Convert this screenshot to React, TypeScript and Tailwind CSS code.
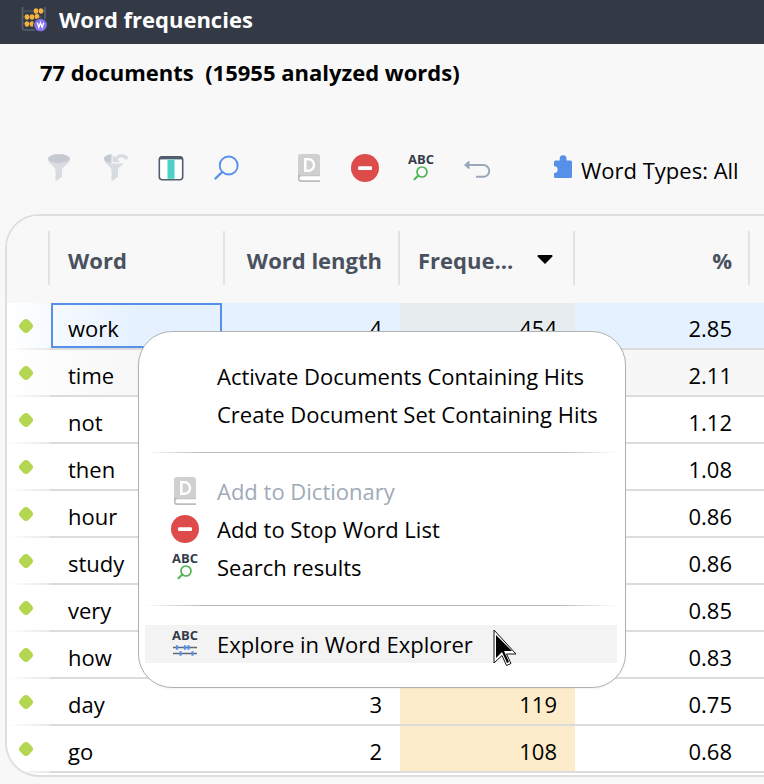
import React from "react";

type Row = { word: string; length: number; frequency: number; percent: string };

const rows: Row[] = [
  { word: "work", length: 4, frequency: 454, percent: "2.85" },
  { word: "time", length: 4, frequency: 337, percent: "2.11" },
  { word: "not", length: 3, frequency: 179, percent: "1.12" },
  { word: "then", length: 4, frequency: 173, percent: "1.08" },
  { word: "hour", length: 4, frequency: 137, percent: "0.86" },
  { word: "study", length: 5, frequency: 137, percent: "0.86" },
  { word: "very", length: 4, frequency: 136, percent: "0.85" },
  { word: "how", length: 3, frequency: 132, percent: "0.83" },
  { word: "day", length: 3, frequency: 119, percent: "0.75" },
  { word: "go", length: 2, frequency: 108, percent: "0.68" },
];

function AbacusIcon() {
  return (
    <svg width="26" height="26" viewBox="0 0 26 26" aria-hidden="true">
      <path d="M1.5 1v21a2 2 0 0 0 2 2H14M24 1v12" fill="none" stroke="#56636f" strokeWidth="1.6" />
      <path d="M1 5h24M1 11h20M1 17.500h14" stroke="#56636f" strokeWidth="1" />
      <g fill="#f5b13d">
        <ellipse cx="15" cy="5" rx="2.300" ry="2.700" />
        <ellipse cx="20" cy="5" rx="2.300" ry="2.700" />
        <ellipse cx="6" cy="11" rx="2.300" ry="2.700" />
        <ellipse cx="11" cy="11" rx="2.300" ry="2.700" />
        <ellipse cx="16" cy="10.500" rx="2.300" ry="2.700" />
        <ellipse cx="6" cy="18" rx="2.300" ry="2.700" />
        <ellipse cx="11" cy="18" rx="2.300" ry="2.700" />
      </g>
      <circle cx="19" cy="19" r="7" fill="#333a46" />
      <circle cx="19.500" cy="19" r="6.300" fill="#8673ee" />
      <path d="M16.300 16.700l1.500 4.800 1.700-4.800 1.700 4.800 1.500-4.800" fill="none" stroke="#fff" strokeWidth="1.300" />
    </svg>
  );
}

function FunnelIcon() {
  return (
    <svg width="28" height="28" viewBox="0 0 28 28" aria-hidden="true">
      <path d="M3 4.500C3 8 5 9.500 8 12.200c1.800 1.600 2.500 2.500 2.500 4.800v9.500l.8.500 5.700-4.200V17c0-2.300.8-3.200 2.600-4.800C22.800 9.500 25 8 25 4.500z" fill="#d8dbe0" />
      <ellipse cx="14" cy="4.500" rx="11" ry="4.400" fill="#c5cad2" />
    </svg>
  );
}

function FunnelUndoIcon() {
  return (
    <svg width="28" height="28" viewBox="0 0 28 28" aria-hidden="true">
      <path d="M3 4.500C3 8 5 9.500 8 12.200c1.800 1.600 2.500 2.500 2.500 4.800v9.500l.8.500 5.700-4.200V17c0-2.300.8-3.200 2.600-4.800l3.400-3.200L9.500 4z" fill="#d8dbe0" />
      <path d="M12 .200C7 .2 3 1.800 3 4.500s3.500 4.200 9 4.400z" fill="#c5cad2" />
      <path d="M10.500 0v9.500h12V0z" fill="#f8f8f8" />
      <path d="M11.500 1v7.300h7.500l-2.500-2.800c1.800-2.400 5.300-2.600 7.100-.6l1 1.100 3-2.200C23.800-1 17.800-.6 14.200 3.500z" fill="#d8dbe0" />
    </svg>
  );
}

function ColumnsIcon() {
  return (
    <svg width="28" height="28" viewBox="0 0 28 28" aria-hidden="true">
      <rect x="2.300" y="2.700" width="23.400" height="23" rx="3" fill="#fff" stroke="#525e6d" strokeWidth="1.600" />
      <path d="M2 5V5.500a3.200 3.200 0 0 1 3.200-3.200h17.600a3.200 3.200 0 0 1 3.200 3.200z" fill="#525e6d" />
      <rect x="10.500" y="5.500" width="7" height="19.300" fill="#4dd0c7" />
    </svg>
  );
}

function SearchIcon() {
  return (
    <svg width="28" height="28" viewBox="0 0 28 28" aria-hidden="true">
      <g fill="none" stroke="#5690ee" strokeLinecap="round">
        <circle cx="15.700" cy="11.500" r="9" strokeWidth="1.900" />
        <path d="M9.200 18l-6.700 6.500" strokeWidth="2.400" />
      </g>
    </svg>
  );
}

function DictionaryIcon() {
  return (
    <svg width="28" height="28" viewBox="0 0 28 28" aria-hidden="true">
      <path d="M6 0h16a3 3 0 0 1 3 3v19H3V3a3 3 0 0 1 3-3z" fill="#d0d0d0" />
      <path d="M3 20v4.500A3.300 3.300 0 0 0 6.300 28H25v-8z" fill="#bdbdbd" />
      <path d="M3 20h22v1.500H6z" fill="#d0d0d0" />
      <path d="M25 22.300H6.500a2 2 0 0 0 0 4H25z" fill="#fff" />
      <path d="M10.300 5.300h3.500a5.200 5.700 0 0 1 0 11.400h-3.500z" fill="none" stroke="#fff" strokeWidth="2.400" />
    </svg>
  );
}

function StopIcon() {
  return (
    <svg width="28" height="28" viewBox="0 0 28 28" aria-hidden="true">
      <circle cx="14" cy="14" r="14" fill="#dd4b4b" />
      <rect x="7" y="12.200" width="14" height="3.800" rx="1.200" fill="#fff" />
    </svg>
  );
}

function AbcLabel() {
  return (
    <text x="14" y="10" textAnchor="middle" fontSize="13" fontWeight="700" fill="#333c48" fontFamily="'Open Sans', sans-serif">
      ABC
    </text>
  );
}

function AbcSearchIcon() {
  return (
    <svg width="28" height="28" viewBox="0 0 28 28" className="overflow-visible" aria-hidden="true">
      <AbcLabel />
      <g fill="none" stroke="#4db553" strokeLinecap="round">
        <circle cx="15" cy="18" r="5" strokeWidth="1.700" />
        <path d="M11.300 21.500L7.500 25.200" strokeWidth="2" />
      </g>
    </svg>
  );
}

function AbcExplorerIcon() {
  return (
    <svg width="28" height="28" viewBox="0 0 28 28" className="overflow-visible" aria-hidden="true">
      <AbcLabel />
      <path d="M2 17.500h24M2 23.500h24" stroke="#5c6977" strokeWidth="1.600" />
      <path d="M6 15.200v4.600M14 15.200v4.600M17.500 15.200v4.600M9.500 21.200v4.600M21.500 21.200v4.600" stroke="#5690ee" strokeWidth="2.200" />
    </svg>
  );
}

function UndoIcon() {
  return (
    <svg width="28" height="28" viewBox="0 0 28 28" aria-hidden="true">
      <path d="M5 11h15.300a5.900 5.900 0 0 1 0 11.800H13" fill="none" stroke="#9aa7b8" strokeWidth="1.900" />
      <path d="M1.500 11l4.500-3.800v7.600z" fill="#9aa7b8" stroke="#9aa7b8" strokeLinejoin="round" />
    </svg>
  );
}

function PuzzleIcon() {
  return (
    <svg width="20" height="28" viewBox="0 0 20 28" aria-hidden="true">
      <path
        d="M2.500 6.500h4.200V4.600a3.400 3.400 0 0 1 6.800 0v1.900H17.500A1.500 1.500 0 0 1 19 8v14.500A1.500 1.500 0 0 1 17.500 24h-15A1.500 1.500 0 0 1 1 22.500V19a3.400 3.400 0 0 0 3.600-3.400A3.400 3.400 0 0 0 1 12.200V8a1.500 1.500 0 0 1 1.500-1.500z"
        fill="#5690e8"
      />
    </svg>
  );
}

function Pointer() {
  return (
    <svg className="absolute left-[354px] top-[297px]" width="24" height="38" viewBox="0 0 24 38" aria-hidden="true">
      <path d="M1 1v33l8-7.500 4.500 10 4.500-2-4.500-9.500H23z" fill="#fff" stroke="#111" strokeWidth="1" />
      <path d="M3 6v23l6-6 5 11 2-1-5-11h8z" fill="#000" />
    </svg>
  );
}

function ToolButton({ label, children, disabled }: { label: string; children: React.ReactNode; disabled?: boolean }) {
  return (
    <button type="button" aria-label={label} disabled={disabled} className="size-7 shrink-0">
      {children}
    </button>
  );
}

function HeaderCell({ children, className = "" }: { children?: React.ReactNode; className?: string }) {
  return (
    <th scope="col" className="p-0 pb-1 font-bold">
      <div className={`flex h-[54px] items-center border-r-2 border-[#e3e3e3] pl-[18px] pr-4 pt-1 ${className}`}>{children}</div>
    </th>
  );
}

function MenuItem({ label, icon, disabled, active }: { label: string; icon?: React.ReactNode; disabled?: boolean; active?: boolean }) {
  return (
    <button
      type="button"
      role="menuitem"
      disabled={disabled}
      className={`flex h-[38px] w-full items-center gap-[18px] pl-[26px] text-left disabled:text-[#a0aab8] ${active ? "bg-[#f3f3f3]" : ""}`}
    >
      <span className="size-7 shrink-0">{icon}</span>
      <span className="whitespace-nowrap">{label}</span>
    </button>
  );
}

function MenuSeparator() {
  return (
    <div role="separator" className="flex h-[39px] items-center">
      <div className="h-px w-full bg-[linear-gradient(to_right,transparent,#b8bac0_12%,#b8bac0_88%,transparent)]" />
    </div>
  );
}

function ContextMenu() {
  return (
    <div
      role="menu"
      className="absolute left-[138px] top-[287px] w-[488px] rounded-[34px] border border-[#b0b0b0] bg-white pb-6 pl-1.5 pr-2 pt-[25px] shadow-xs"
    >
      <MenuItem label="Activate Documents Containing Hits" />
      <MenuItem label="Create Document Set Containing Hits" />
      <MenuSeparator />
      <MenuItem label="Add to Dictionary" icon={<DictionaryIcon />} disabled />
      <MenuItem label="Add to Stop Word List" icon={<StopIcon />} />
      <MenuItem label="Search results" icon={<AbcSearchIcon />} />
      <MenuSeparator />
      <MenuItem label="Explore in Word Explorer" icon={<AbcExplorerIcon />} active />
      <Pointer />
    </div>
  );
}

function DataRow({ row, index }: { row: Row; index: number }) {
  const selected = index === 0;
  const hovered = index === 1;
  const tone = selected
    ? "bg-linear-to-r from-white to-[#e5f1ff] to-[130px]"
    : hovered
      ? "bg-linear-to-r from-white to-[#f7f7f7] to-[130px]"
      : "bg-white";
  const rule = "border-b-2 border-[#dcdcdc]";
  return (
    <tr className={`h-[47px] ${tone}`}>
      <td className="p-0">
        <div className="flex h-[45px] items-center pl-[13px]">
          <span className="size-3 rotate-45 rounded-[4px] bg-[#b4d651]" />
        </div>
        <div className="h-0.5 bg-linear-to-r from-white to-[#e8e8e8]" />
      </td>
      <td className={`${rule} p-0`}>
        {selected ? (
          <div className="ml-px mr-[3px] flex h-[45px] items-center border-2 border-[#5690e8] pl-[15px] pt-1">{row.word}</div>
        ) : (
          <div className="pl-[18px] pt-1">{row.word}</div>
        )}
      </td>
      <td className={`${rule} px-[18px] pb-0 pt-1 text-right`}>{row.length}</td>
      <td className={`${rule} px-[18px] pb-0 pt-1 text-right ${selected ? "bg-[#e7ecef]" : "bg-[#fdecca]"}`}>{row.frequency}</td>
      <td className={`${rule} px-[18px] pb-0 pt-1 text-right`}>{row.percent}</td>
      <td className={rule} />
    </tr>
  );
}

export default function App() {
  return (
    <div className="min-h-screen overflow-hidden bg-[#f8f8f8] font-['Open_Sans','Noto_Sans',sans-serif] text-[22px] leading-7 text-black">
      <header className="flex h-11 items-center gap-3 bg-[#333a46] pl-[21px] pb-1.5">
        <AbacusIcon />
        <h1 className="font-bold text-white">Word frequencies</h1>
      </header>
      <main className="relative">
        <p className="whitespace-pre pl-10 pt-3.5 font-bold">77 documents  (15955 analyzed words)</p>
        <div role="toolbar" aria-label="Word frequency tools" className="mt-[66px] flex items-center gap-7 pl-[45px]">
          <ToolButton label="Filter" disabled><FunnelIcon /></ToolButton>
          <ToolButton label="Reset filters" disabled><FunnelUndoIcon /></ToolButton>
          <ToolButton label="Select columns"><ColumnsIcon /></ToolButton>
          <ToolButton label="Search"><SearchIcon /></ToolButton>
          <div className="flex items-center gap-7 pl-[26px]">
            <ToolButton label="Add to dictionary" disabled><DictionaryIcon /></ToolButton>
            <ToolButton label="Add to stop word list"><StopIcon /></ToolButton>
            <ToolButton label="Search results"><AbcSearchIcon /></ToolButton>
            <ToolButton label="Undo"><UndoIcon /></ToolButton>
          </div>
          <button type="button" className="ml-[34px] flex items-center gap-2 whitespace-nowrap">
            <PuzzleIcon />
            <span className="pt-1">Word Types: All</span>
          </button>
        </div>
        <section className="ml-[5px] mt-[30px] overflow-hidden rounded-l-[34px] border-2 border-r-0 border-[#dedede] bg-white pb-0.5">
          <table className="w-full table-fixed border-separate border-spacing-0">
            <colgroup>
              <col className="w-[43px]" />
              <col className="w-[175px]" />
              <col className="w-[175px]" />
              <col className="w-[175px]" />
              <col className="w-[175px]" />
              <col />
            </colgroup>
            <thead>
              <tr className="h-[87px] bg-[#f8f8f8] text-[#4a515e]">
                <HeaderCell />
                <HeaderCell>Word</HeaderCell>
                <HeaderCell className="justify-end whitespace-nowrap">Word length</HeaderCell>
                <HeaderCell className="justify-between">
                  <span>Freque...</span>
                  <svg width="16" height="10" viewBox="0 0 16 10" className="mr-1" aria-hidden="true">
                    <path d="M1 0h14l.7 1.200L8 9 .3 1.200z" fill="#000" />
                  </svg>
                </HeaderCell>
                <HeaderCell className="justify-end">%</HeaderCell>
                <th />
              </tr>
            </thead>
            <tbody>
              {rows.map((row, index) => (
                <DataRow key={row.word} row={row} index={index} />
              ))}
            </tbody>
          </table>
        </section>
        <ContextMenu />
      </main>
    </div>
  );
}
